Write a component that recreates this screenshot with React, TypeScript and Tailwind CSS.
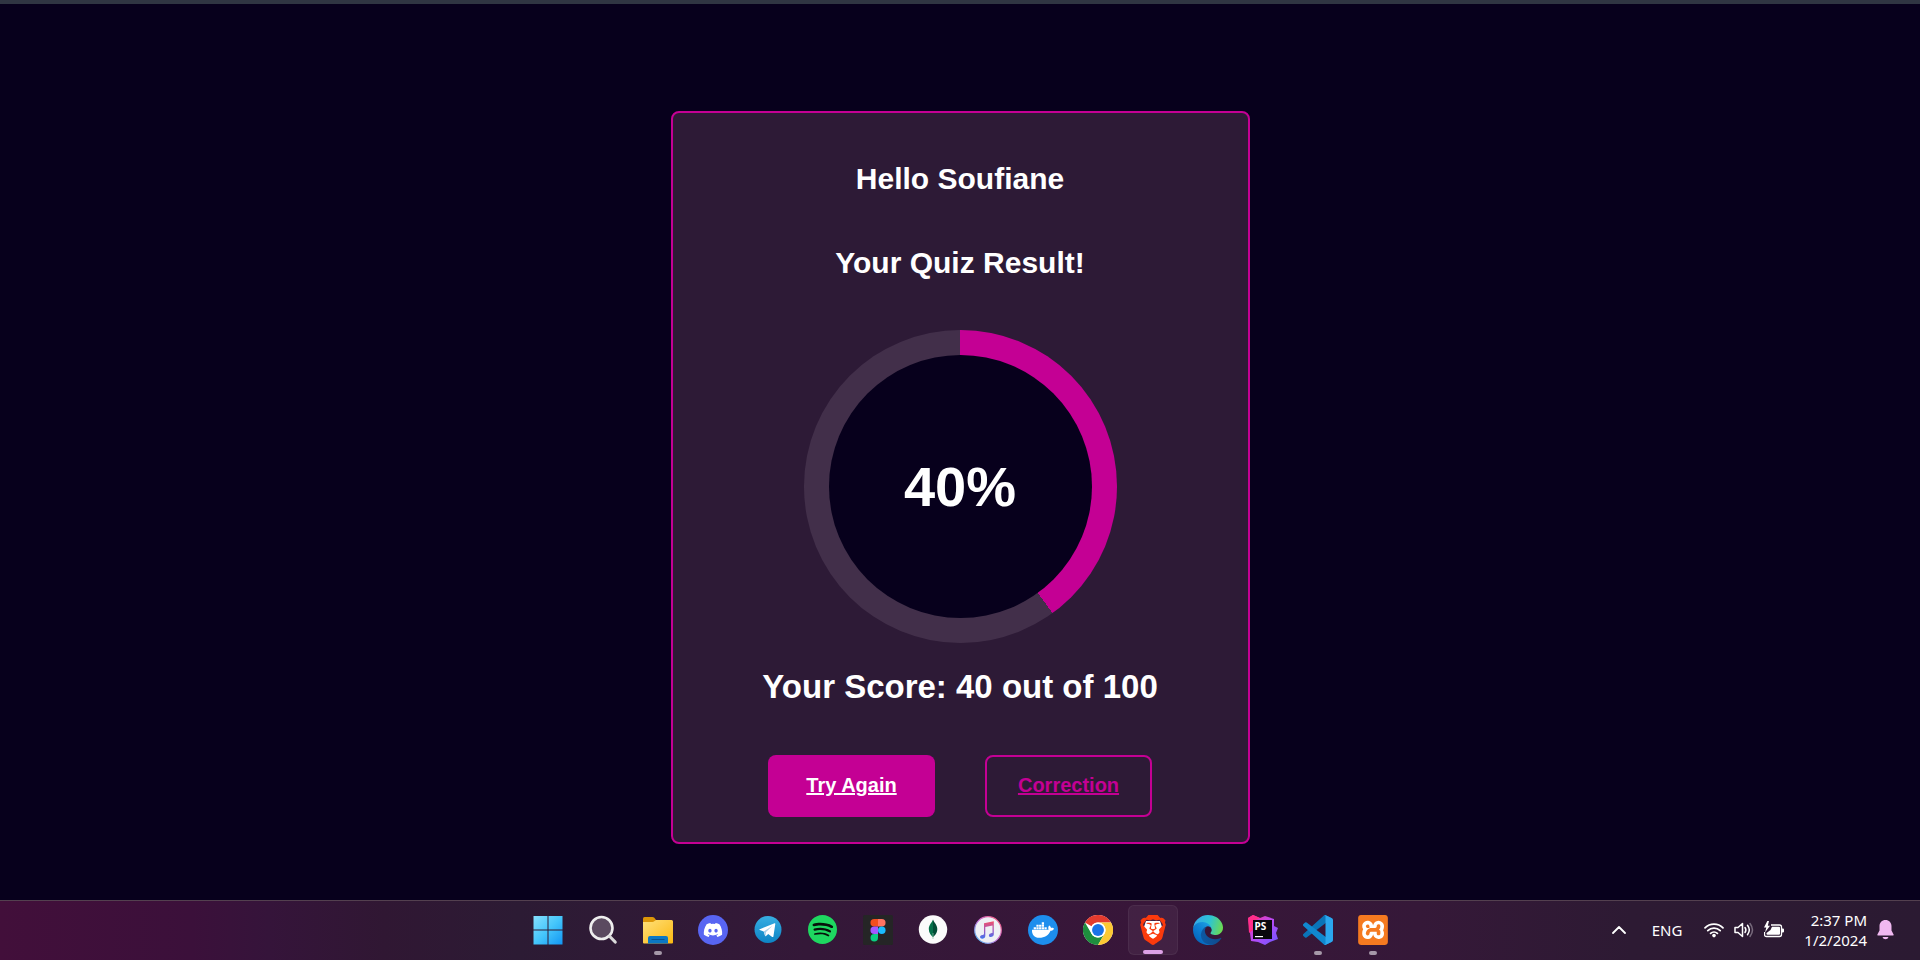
import type { ReactNode } from 'react';
import { FaDiscord, FaDocker } from 'react-icons/fa';
import { SiBrave, SiSpotify, SiXampp } from 'react-icons/si';

const Windows = () => (
  <svg viewBox="0 0 30 30" className="size-[30px]">
    <defs>
      <linearGradient id="win" x1="0" y1="0" x2="1" y2="1" gradientUnits="objectBoundingBox">
        <stop offset="0" stopColor="#86e0fd" />
        <stop offset="0.5" stopColor="#45c6fb" />
        <stop offset="1" stopColor="#1296f3" />
      </linearGradient>
    </defs>
    <path fill="url(#win)" d="M.5 1h14v13.500H.5zM15.500 1h14v13.500h-14zM.5 15.500h14v14H.5zM15.500 15.500h14v14h-14z" />
  </svg>
);

const Search = () => (
  <svg viewBox="0 0 30 30" className="size-[30px]" fill="none" strokeLinecap="round">
    <circle cx="13.500" cy="13" r="11" fill="#5b4a60" stroke="#eeeeee" strokeWidth="2.600" />
    <path d="M21.800 21.500l5.400 5.500" stroke="#dadada" strokeWidth="3.200" />
  </svg>
);

const Folder = () => (
  <svg viewBox="0 0 30 30" className="size-[30px]">
    <defs>
      <linearGradient id="fold" x1="0" y1="0" x2="1" y2="1">
        <stop offset="0" stopColor="#ffe07a" />
        <stop offset="1" stopColor="#fbb811" />
      </linearGradient>
    </defs>
    <path fill="#dc9608" d="M0 3.500Q0 2 1.500 2h8q1 0 1.800.8L13 5v4H0z" />
    <path fill="url(#fold)" d="M0 7h9.500q1 0 1.700-.8L13 5h15.500Q30 5 30 6.500V27.500Q30 28.500 29 28.500H1Q0 28.500 0 27.500z" />
    <path fill="#0b78c4" d="M5 28.500V23q0-2 2-2h16q2 0 2 2v5.500z" />
    <path fill="#075391" d="M8.500 24h13v1h-13z" />
  </svg>
);

const Discord = () => (
  <span className="grid size-[30px] place-items-center rounded-full bg-[#5865f2] text-white">
    <FaDiscord className="size-5" />
  </span>
);

const Telegram = () => (
  <svg viewBox="0 0 30 30" className="size-[30px]">
    <defs>
      <linearGradient id="tg" x1="0" y1="0" x2="0" y2="1">
        <stop offset="0" stopColor="#37aee2" />
        <stop offset="1" stopColor="#0d84c4" />
      </linearGradient>
    </defs>
    <circle cx="15" cy="14.500" r="13.500" fill="url(#tg)" />
    <path fill="#fff" d="M21.600 8.200L6.700 14.200q-.7.5.1.9l3.900 1.300L12 20.800q.4.600 1 .1l2.200-1.900 4 3q1 .4 1.200-.6l1.900-12.300q.1-1.200-.7-.900z" />
    <path fill="#a9cfe8" d="M10.700 16.400L19.500 10.800 13 17l-.5 4.200z" />
  </svg>
);

const Spotify = () => (
  <span className="grid size-[30px] place-items-center">
    <svg viewBox="0 0 30 30" className="col-start-1 row-start-1 size-[30px]">
      <circle cx="15" cy="15" r="12.500" fill="#07120b" />
    </svg>
    <SiSpotify className="col-start-1 row-start-1 size-[29px] text-[#1ed760]" />
  </span>
);

const Figma = () => (
  <svg viewBox="0 0 30 30" className="size-[30px]">
    <rect width="30" height="30" rx="1.500" fill="#252526" />
    <path fill="#f24e1e" d="M15 4h-3.800a3.750 3.750 0 0 0 0 7.500H15z" />
    <path fill="#ff7262" d="M15 4h3.800a3.750 3.750 0 0 1 0 7.500H15z" />
    <path fill="#a259ff" d="M15 11.500h-3.800a3.750 3.750 0 0 0 0 7.500H15z" />
    <circle cx="18.800" cy="15.250" r="3.750" fill="#1abcfe" />
    <path fill="#0acf83" d="M15 19h-3.800a3.750 3.750 0 1 0 3.800 3.750z" />
  </svg>
);

const Mongo = () => (
  <svg viewBox="0 0 30 30" className="size-[30px]">
    <circle cx="15" cy="14.500" r="14.200" fill="#fbfbfb" />
    <path fill="#05704a" d="M15 4.500c-1 3-4.200 5.300-4.200 9.500 0 4 2.400 6.500 4.200 8.300z" />
    <path fill="#024c36" d="M15 4.500c1 3 4.300 5.300 4.300 9.500 0 4-2.500 6.500-4.300 8.300z" />
    <path stroke="#8ac7a6" strokeWidth=".7" d="M15 18v6" />
  </svg>
);

const Music = () => (
  <svg viewBox="0 0 30 30" className="size-[30px]">
    <defs>
      <linearGradient id="ring" x1="1" y1="0" x2="0" y2="1">
        <stop offset="0" stopColor="#fb5c74" />
        <stop offset=".5" stopColor="#c86dd7" />
        <stop offset="1" stopColor="#3bc4f5" />
      </linearGradient>
      <linearGradient id="note" x1="0" y1="0" x2="0" y2="1">
        <stop offset="0" stopColor="#f2506a" />
        <stop offset=".55" stopColor="#9b58c4" />
        <stop offset="1" stopColor="#3f74ee" />
      </linearGradient>
    </defs>
    <circle cx="15" cy="15" r="13.300" fill="#eef0f5" stroke="url(#ring)" strokeWidth="1.200" />
    <path fill="url(#note)" d="M11 8.300l9.800-2.100v13.200c0 2.700-4.800 3.500-4.900 1 0-2.200 3-2.100 3.600-2.700V10.500l-7.200 1.600v9c0 3-5.200 3.600-5.200.9 0-2.200 3.300-2 3.900-2.800z" />
  </svg>
);

const Docker = () => (
  <span className="grid size-[30px] place-items-center rounded-full bg-[#1d8eed] text-white">
    <FaDocker className="size-[22px]" />
  </span>
);

const Chrome = () => (
  <svg viewBox="0 0 48 48" className="size-[30px]">
    <circle cx="24" cy="24" r="24" fill="#fff" />
    <path fill="#e33b2e" d="M3.200 12A24 24 0 0 1 44.800 12H24A12 12 0 0 0 13.600 18z" />
    <path fill="#1e8e3e" d="M24 48A24 24 0 0 1 3.200 12L13.600 30A12 12 0 0 0 34.400 30z" />
    <path fill="#fcc934" d="M44.800 12A24 24 0 0 1 24 48L34.400 30A12 12 0 0 0 24 12z" />
    <circle cx="24" cy="24" r="12" fill="#fff" />
    <circle cx="24" cy="24" r="9.500" fill="#1a73e8" />
  </svg>
);

const Brave = () => (
  <span className="grid size-[30px] place-items-center">
    <svg viewBox="0 0 30 30" className="col-start-1 row-start-1 size-[30px]">
      <path fill="#fff" d="M8 6h14l2 6-3 10-6 5-6-5-3-10z" />
    </svg>
    <SiBrave className="col-start-1 row-start-1 size-[30px] text-[#fb3a0c]" />
  </span>
);

const Edge = () => (
  <svg viewBox="0 0 256 256" className="size-[30px]">
    <defs>
      <linearGradient id="e1" x1="63" y1="177" x2="241" y2="177" gradientUnits="userSpaceOnUse">
        <stop offset="0" stopColor="#0c59a4" />
        <stop offset="1" stopColor="#114a8b" />
      </linearGradient>
      <linearGradient id="e2" x1="157" y1="98" x2="46" y2="220" gradientUnits="userSpaceOnUse">
        <stop offset="0" stopColor="#1b9de2" />
        <stop offset=".5" stopColor="#0d7fd4" />
        <stop offset="1" stopColor="#0669bf" />
      </linearGradient>
      <linearGradient id="e3" x1="10" y1="60" x2="250" y2="130" gradientUnits="userSpaceOnUse">
        <stop offset="0" stopColor="#35a8e8" />
        <stop offset=".5" stopColor="#2dc3d4" />
        <stop offset="1" stopColor="#6edb4c" />
      </linearGradient>
    </defs>
    <path fill="url(#e1)" d="M235.700 195.500a93.700 93.700 0 0 1-10.600 4.700 101.900 101.900 0 0 1-35.900 6.500c-47.300 0-88.500-32.500-88.500-74.300a31.500 31.500 0 0 1 16.400-27.300c-42.800 1.800-53.800 46.400-53.800 72.500 0 74 68.100 81.400 82.800 81.400 7.900 0 19.800-2.300 27-4.600l1.300-.4a128.300 128.300 0 0 0 66.600-52.800 4 4 0 0 0-5.300-5.700z" />
    <path fill="url(#e2)" d="M105.700 241.400a79.200 79.200 0 0 1-22.700-21.300 80.700 80.700 0 0 1 29.500-120c3.200-1.500 8.500-4.100 15.600-4a32.400 32.400 0 0 1 25.700 13 31.900 31.900 0 0 1 6.300 18.700c0-.2 24.500-79.600-80-79.600-43.900 0-80 41.700-80 78.200a130.200 130.200 0 0 0 12.100 56 128 128 0 0 0 156.400 67 75.500 75.500 0 0 1-62.800-8z" />
    <path fill="url(#e3)" d="M152.300 148.900c-.8 1-3.300 2.500-3.300 5.700 0 2.600 1.700 5.200 4.800 7.300 14.300 10 41.400 8.600 41.500 8.600a59.600 59.600 0 0 0 30.300-8.300A61.400 61.400 0 0 0 256 109.200c.3-22.400-8-37.300-11.300-43.900C223.500 23.900 177.700 0 128 0A128 128 0 0 0 0 126.200c.5-36.500 36.800-66 80-66 3.500 0 23.500.3 42 10a72.600 72.600 0 0 1 30.900 29.300c6.100 10.600 7.200 24.100 7.200 29.500s-2.700 13.300-7.800 19.900z" />
  </svg>
);

const PhpStorm = () => (
  <svg viewBox="0 0 30 30" className="size-[30px]">
    <defs>
      <linearGradient id="ps" x1="0" y1="0" x2="1" y2="1">
        <stop offset="0" stopColor="#ff318c" />
        <stop offset=".5" stopColor="#b74af7" />
        <stop offset="1" stopColor="#6b57ff" />
      </linearGradient>
    </defs>
    <path fill="url(#ps)" d="M0 3l5-3 7 3 5-2 9 3v7l4 2-2 5 2 6-8 3-5 3-7-3-7-1-1-8z" />
    <path fill="#ff2d8a" d="M0 3l5-3 7 3-7 3v9l-4 3z" />
    <path fill="#09080d" d="M5 5h19v19H5z" />
    <path fill="#fff" d="M7 21h8v1.200H7z" />
    <text x="6.500" y="15" fill="#fff" fontSize="10" fontWeight="700" fontFamily="Noto Sans, sans-serif">PS</text>
  </svg>
);

const VsCode = () => (
  <svg viewBox="0 0 100 100" className="size-[30px]">
    <path fill="#0a74b8" d="M96.500 10.800L75.900.9a6.200 6.200 0 0 0-7.100 1.200L1.300 63.500a4.200 4.200 0 0 0 0 6.200l5.500 5a4.200 4.200 0 0 0 5.400.2l81.200-61.600c2.800-2.100 6.600-.1 6.600 3.300v-.2a6.200 6.200 0 0 0-3.500-5.600z" />
    <path fill="#1088cf" d="M96.500 89.200L75.900 99.100a6.200 6.200 0 0 1-7.100-1.200L1.300 36.500a4.200 4.200 0 0 1 0-6.200l5.500-5a4.200 4.200 0 0 1 5.400-.2l81.200 61.600c2.800 2.100 6.600.1 6.600-3.300v.2a6.200 6.200 0 0 1-3.500 5.600z" />
    <path fill="#2ba7ee" d="M75.900 99.100a6.200 6.200 0 0 1-7.100-1.200c2.300 2.300 6.200.7 6.200-2.600V4.700c0-3.300-3.900-4.900-6.200-2.600A6.200 6.200 0 0 1 75.900.9l20.600 9.900A6.200 6.200 0 0 1 100 16.400v67.200a6.200 6.200 0 0 1-3.500 5.600z" />
  </svg>
);

const Xampp = () => (
  <span className="grid size-[30px] place-items-center">
    <svg viewBox="0 0 30 30" className="col-start-1 row-start-1 size-[30px]">
      <rect x="3" y="3" width="24" height="24" fill="#fff" />
    </svg>
    <SiXampp className="col-start-1 row-start-1 size-[30px] text-[#f57a20]" />
  </span>
);

type App = { name: string; icon: ReactNode; state?: 'open' | 'active' };

const apps: App[] = [
  { name: 'Start', icon: <Windows /> },
  { name: 'Search', icon: <Search /> },
  { name: 'File Explorer', icon: <Folder />, state: 'open' },
  { name: 'Discord', icon: <Discord /> },
  { name: 'Telegram', icon: <Telegram /> },
  { name: 'Spotify', icon: <Spotify /> },
  { name: 'Figma', icon: <Figma /> },
  { name: 'MongoDB Compass', icon: <Mongo /> },
  { name: 'Music', icon: <Music /> },
  { name: 'Docker', icon: <Docker /> },
  { name: 'Chrome', icon: <Chrome /> },
  { name: 'Brave', icon: <Brave />, state: 'active' },
  { name: 'Edge', icon: <Edge /> },
  { name: 'PhpStorm', icon: <PhpStorm /> },
  { name: 'Visual Studio Code', icon: <VsCode />, state: 'open' },
  { name: 'XAMPP', icon: <Xampp />, state: 'open' },
];

function TaskButton({ app }: { app: App }) {
  const active = app.state === 'active';
  return (
    <button
      type="button"
      aria-label={app.name}
      className={
        active
          ? 'relative grid size-[50px] place-items-center rounded-md border border-white/5 bg-white/5'
          : 'relative grid size-[50px] place-items-center'
      }
    >
      {app.icon}
      {active && <span className="absolute bottom-0 h-1 w-5 rounded-full bg-[#dda0e6]" />}
      {app.state === 'open' && <span className="absolute bottom-0 h-1 w-2 rounded-full bg-[#a598a8]" />}
    </button>
  );
}

function Tray() {
  return (
    <div className="flex items-center justify-self-end pr-[26px] font-['Noto_Sans','Open_Sans',sans-serif] text-[15px] leading-5 text-white">
      <button type="button" aria-label="Show hidden icons" className="mr-[26px]">
        <svg viewBox="0 0 14 8" className="h-2 w-3.5" fill="none" stroke="#fff" strokeWidth="1.800" strokeLinecap="round" strokeLinejoin="round">
          <path d="M1 7l6-6 6 6" />
        </svg>
      </button>
      <button type="button" className="mr-[22px]">ENG</button>
      <button type="button" aria-label="Network, volume and battery" className="mr-5 flex items-center gap-2.5">
        <svg viewBox="0 0 20 16" className="h-4 w-5" fill="none" stroke="#fff" strokeWidth="1.700" strokeLinecap="round">
          <path d="M1 5.800a12.700 12.700 0 0 1 18 0M3.800 8.700a8.800 8.800 0 0 1 12.400 0M6.600 11.400a4.900 4.900 0 0 1 6.800 0" />
          <circle cx="10" cy="13.600" r="1.800" fill="#fff" stroke="none" />
        </svg>
        <svg viewBox="0 0 20 16" className="h-4 w-5" fill="none" stroke="#fff" strokeWidth="1.500" strokeLinecap="round" strokeLinejoin="round">
          <path d="M1 5.500h3L8.500 1.500v13L4 10.500H1z" />
          <path d="M11 5.500q1.800 2.500 0 5M13.500 3.300q3.600 4.700 0 9.400" />
          <path stroke="#76697b" d="M16 1.500q5 6.500 0 13" />
        </svg>
        <svg viewBox="0 0 20 17" className="h-[17px] w-5" fill="none" stroke="#fff" strokeWidth="1.300" strokeLinejoin="round">
          <path d="M7 4h8.500q2 0 2 2v7.500q0 2-2 2h-13q-2 0-2-2V11" />
          <path fill="#fff" stroke="none" d="M8 5.700h7q1 0 1 1v6.100q0 1-1 1H3.500q-1 0-1-1v-.800L6.500 9zM18 7.500h1q1 0 1 1v2q0 1-1 1h-1z" />
          <path fill="#fff" stroke="none" d="M3.300 0L0 6.500h2.300L1 11.500 6 4.700H3.800L5 0z" />
        </svg>
      </button>
      <button type="button" className="mr-2.5 text-right">
        <span className="block">2:37 PM</span>
        <span className="block">1/2/2024</span>
      </button>
      <button type="button" aria-label="Notifications">
        <svg viewBox="0 0 17 20" className="h-5 w-[17px]" fill="#f0b8f0">
          <path d="M8.500 0C4.900 0 2.500 2.700 2.500 6v4.500L.4 14.600Q0 15.600 1 15.600h15q1 0 .6-1L14.500 10.500V6c0-3.300-2.400-6-6-6z" />
          <path d="M5.500 17h6q-.6 2.200-3 2.200T5.500 17z" />
        </svg>
      </button>
    </div>
  );
}

export default function App() {
  const percent = 40;
  return (
    <div className="flex min-h-screen flex-col border-t-4 border-[#2f3542] bg-[#07001c] font-['Liberation_Sans',Arial,sans-serif] font-bold text-white">
      <main className="flex flex-1 flex-col items-center pt-[107px]">
        <section className="flex w-full max-w-[579px] flex-col items-center rounded-lg border-2 border-[#c40094] bg-[#2d1a36] px-2 pt-12 pb-[25px]">
          <h1 className="text-[30px] leading-9">Hello Soufiane</h1>
          <h2 className="mt-12 text-[30px] leading-9">Your Quiz Result!</h2>
          <div
            role="img"
            aria-label="40 percent"
            className="mt-[49px] grid size-[313px] place-items-center rounded-full"
            style={{ background: `conic-gradient(#c40094 ${percent}%, #422f4a ${percent}%)` }}
          >
            <div className="grid size-[263px] place-items-center rounded-full bg-[#07001c]">
              <span className="text-[56px] leading-[64px]">{percent}%</span>
            </div>
          </div>
          <p className="mt-[26px] text-[33px] leading-9">Your Score: 40 out of 100</p>
          <div className="mt-[50px] flex gap-[50px] text-xl">
            <a href="#quiz" className="flex h-[62px] w-[167px] items-center justify-center rounded-lg bg-[#c40094] pb-0.5 underline">
              Try Again
            </a>
            <a href="#correction" className="flex h-[62px] w-[167px] items-center justify-center rounded-lg border-2 border-[#c40094] pb-0.5 text-[#c40094] underline">
              Correction
            </a>
          </div>
        </section>
      </main>
      <footer className="grid h-[60px] grid-cols-[1fr_auto_1fr] items-center border-t border-[#53404f] bg-[linear-gradient(90deg,#420f3a_0%,#3b103a_10%,#35143a_14%,#301733_20%,#2c1b34_27%,#341838_42%,#381639_60%,#351838_74%,#2d1a33_85%,#2b1a32_100%)] pb-0.5 font-normal">
        <nav aria-label="Taskbar" className="col-start-2 flex gap-[5px]">
          {apps.map((app) => (
            <TaskButton key={app.name} app={app} />
          ))}
        </nav>
        <Tray />
      </footer>
    </div>
  );
}
